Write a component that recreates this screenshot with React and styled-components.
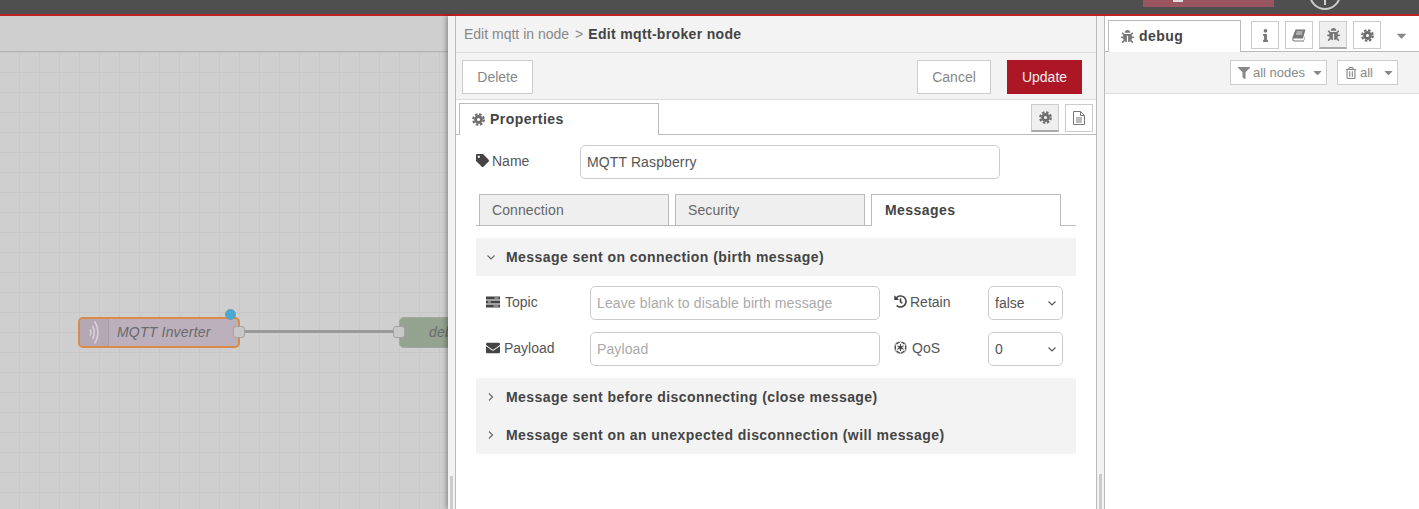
import React from 'react';
import styled, { createGlobalStyle } from 'styled-components';
import { FaTag, FaInfo, FaBug, FaFilter, FaRegTrashAlt, FaEnvelope, FaHistory, FaEmpire, FaCaretDown } from 'react-icons/fa';

const GlobalStyle = createGlobalStyle`
  html, body { margin: 0; padding: 0; height: 100%; overflow: hidden; background: #fff; }
  body { font-family: "Liberation Sans", Arial, sans-serif; font-size: 14px; color: #555; }
  * { box-sizing: border-box; }
`;

const Page = styled.div`
  width: 1419px;
  height: 509px;
  display: flex;
  flex-direction: column;
  overflow: hidden;
`;

const Header = styled.header`
  height: 16px;
  flex: none;
  background: #4f4f4f;
  border-bottom: 2px solid #c02020;
  display: flex;
  align-items: flex-end;
  overflow: hidden;
  padding: 0 0 7px 1143px;
`;

const DeployButton = styled.div`
  width: 131px;
  height: 24px;
  flex: none;
  background: #9a5660;
  display: flex;
  justify-content: center;
  align-items: flex-end;
  padding-right: 62px;
  &::before {
    content: '';
    width: 10px;
    height: 10px;
    margin-bottom: 5px;
    background: #ddd;
  }
`;

const MenuRing = styled.div`
  width: 32px;
  height: 32px;
  flex: none;
  margin: 0 0 -3px 35px;
  border: 2px solid #ccc;
  border-radius: 50%;
  display: flex;
  justify-content: center;
  align-items: flex-end;
  &::before {
    content: '';
    width: 2px;
    height: 8px;
    margin-bottom: 3px;
    background: #ccc;
  }
`;

const Main = styled.div`
  flex: 1;
  display: flex;
  min-height: 0;
`;

const Workspace = styled.section`
  width: 448px;
  flex: none;
  display: flex;
  flex-direction: column;
  background: #cfcfcf;
`;

const WorkspaceTabs = styled.div`
  height: 36px;
  flex: none;
  border-bottom: 1px solid #b4b4b4;
`;

const Canvas = styled.div`
  flex: 1;
  position: relative;
  overflow: hidden;
  background-color: #cfcfcf;
  background-image:
    linear-gradient(to right, #c8c8c8 1px, transparent 1px),
    linear-gradient(to bottom, #c8c8c8 1px, transparent 1px);
  background-size: 20px 20px;
  background-position: 19px 0;
`;

const FlowNode = styled.div`
  position: absolute;
  left: ${p => p.$left}px;
  top: 265px;
  width: ${p => p.$width}px;
  height: 31px;
  display: flex;
  align-items: center;
  border-radius: 5px;
  border: ${p => (p.$selected ? '2px solid #d98b47' : '1px solid #a0a89f')};
  background: ${p => p.$fill};
  font-style: italic;
  letter-spacing: .2px;
  color: #6a6a6a;
  white-space: nowrap;
`;

const NodeIcon = styled.div`
  width: 29px;
  height: 100%;
  flex: none;
  display: flex;
  align-items: center;
  justify-content: center;
  border-right: 1px solid #a99fa9;
  background: #b3a8b3;
  border-radius: 3px 0 0 3px;
`;

const NodeLabel = styled.span`
  padding: 0 0 2px ${p => p.$pad}px;
`;

const Port = styled.div`
  position: absolute;
  left: ${p => p.$left}px;
  top: 274px;
  width: 12px;
  height: 12px;
  border-radius: 3px;
  border: 1px solid #a3a3a3;
  background: #c8c8c8;
`;

const Wire = styled.div`
  position: absolute;
  left: 243px;
  top: 278px;
  width: 156px;
  height: 3px;
  background: #999;
`;

const StatusDot = styled.div`
  position: absolute;
  left: 225px;
  top: 257px;
  width: 11px;
  height: 11px;
  border-radius: 50%;
  background: #48a9d1;
  border: 1px solid #6e9aae;
`;

const Strip = styled.div`
  width: ${p => p.$width}px;
  flex: none;
  background: #f3f3f3;
  position: relative;
  box-shadow: ${p => (p.$shadow ? '-2px 0 4px rgba(0,0,0,.3)' : 'none')};
  z-index: 1;
`;

const ScrollThumb = styled.div`
  position: absolute;
  left: ${p => p.$left}px;
  bottom: 0;
  width: 3px;
  height: ${p => p.$height}px;
  background: #ccc;
`;

const Tray = styled.section`
  width: 642px;
  flex: none;
  display: flex;
  flex-direction: column;
  background: #fff;
  border-left: 1px solid #bbb;
  border-right: 1px solid #bbb;
  z-index: 1;
`;

const Crumbs = styled.div`
  height: 37px;
  flex: none;
  background: #f3f3f3;
  border-bottom: 1px solid #ddd;
  display: flex;
  align-items: center;
  padding-left: 8px;
  color: #888;
  gap: 5px;
  i { font-style: normal; margin-left: 1px; }
  b { color: #444; letter-spacing: .33px; }
`;

const ActionBar = styled.div`
  height: 47px;
  flex: none;
  background: #f3f3f3;
  border-bottom: 1px solid #ddd;
  display: flex;
  align-items: flex-start;
  padding: 7px 14px 0 6px;
`;

const ActionButton = styled.button`
  height: 34px;
  width: ${p => p.$width}px;
  margin-left: ${p => p.$gap || 0}px;
  font: inherit;
  cursor: pointer;
  color: ${p => (p.$primary ? '#eee' : '#888')};
  background: ${p => (p.$primary ? '#ad1625' : '#fff')};
  border: 1px solid ${p => (p.$primary ? '#ad1625' : '#ccc')};
`;

const TabRow = styled.div`
  height: 35px;
  flex: none;
  display: flex;
  align-items: flex-end;
  border-bottom: 1px solid #bbb;
  padding: 0 3px 0 3px;
`;

const ActiveTab = styled.div`
  width: ${p => p.$width}px;
  height: 32px;
  margin-bottom: -1px;
  background: #fff;
  border: 1px solid #bbb;
  border-bottom: none;
  display: flex;
  align-items: center;
  gap: 5px;
  padding-left: ${p => p.$pad}px;
  padding-bottom: 1px;
  font-weight: bold;
  letter-spacing: .45px;
  color: #444;
  svg { color: #777; flex: none; }
`;

const TabIcons = styled.div`
  margin-left: auto;
  align-self: flex-start;
  display: flex;
  gap: 6px;
  padding-top: 4px;
`;

const IconButton = styled.div`
  width: 28px;
  height: 28px;
  display: flex;
  align-items: center;
  justify-content: center;
  font-size: 13px;
  color: #777;
  background: ${p => (p.$active ? '#efefef' : '#fff')};
  border: 1px solid #ccc;
  border-bottom: ${p => (p.$active ? '2px solid #aaa' : '1px solid #ccc')};
`;

const Form = styled.div`
  flex: 1;
  padding: 10px 20px 0 20px;
`;

const NameRow = styled.div`
  display: flex;
  align-items: center;
  height: 34px;
`;

const FieldLabel = styled.label`
  width: ${p => p.$width}px;
  flex: none;
  display: flex;
  align-items: center;
  gap: ${p => p.$gap || 4}px;
  padding-bottom: 3px;
  color: #555;
  svg { color: #444; flex: none; }
`;

const TextInput = styled.input`
  width: ${p => p.$width}px;
  height: 34px;
  padding: 0 6px;
  font: inherit;
  letter-spacing: .12px;
  color: #555;
  background: #fff;
  border: 1px solid #ccc;
  border-radius: 5px;
  outline: none;
  &::placeholder { color: #aaa; opacity: 1; }
`;

const SubTabs = styled.div`
  height: 32px;
  margin-top: 15px;
  display: flex;
  gap: 6px;
  padding-left: 3px;
  border-bottom: 1px solid #bbb;
`;

const SubTab = styled.div`
  width: 190px;
  height: 32px;
  display: flex;
  align-items: center;
  padding: 0 0 ${p => (p.$active ? 2 : 0)}px ${p => (p.$active ? 13 : 12)}px;
  border: 1px solid #bbb;
  border-bottom: ${p => (p.$active ? 'none' : '1px solid #bbb')};
  background: ${p => (p.$active ? '#fff' : '#efefef')};
  color: ${p => (p.$active ? '#444' : '#666')};
  font-weight: ${p => (p.$active ? 'bold' : 'normal')};
  letter-spacing: ${p => (p.$active ? '.45px' : '.1px')};
`;

const SectionBlock = styled.div`
  background: #f3f3f3;
  margin-top: ${p => p.$top}px;
`;

const SectionTitle = styled.div`
  height: 38px;
  display: flex;
  align-items: center;
  gap: 10px;
  padding-left: 10px;
  font-weight: bold;
  letter-spacing: .44px;
  color: #444;
`;

const MessageGrid = styled.div`
  display: grid;
  grid-template-columns: 104px 290px 14px 94px 75px;
  grid-auto-rows: 34px;
  row-gap: 12px;
  margin: 10px 0 12px 10px;
  align-items: center;
`;

const Spacer = styled.div``;

const SelectBox = styled.div`
  height: 34px;
  display: flex;
  align-items: center;
  justify-content: space-between;
  padding: 0 5px 0 6px;
  border: 1px solid #ccc;
  border-radius: 5px;
  background: #fff;
  color: #555;
`;

const Sidebar = styled.aside`
  flex: 1;
  display: flex;
  flex-direction: column;
  border-left: 1px solid #bbb;
  background: #fff;
  min-width: 0;
`;

const SidebarTabs = styled.div`
  height: 36px;
  flex: none;
  display: flex;
  align-items: flex-end;
  padding-left: 3px;
  border-bottom: 1px solid #bbb;
  background: #fff;
`;

const SidebarIcons = styled.div`
  align-self: flex-start;
  display: flex;
  gap: 6px;
  padding: 5px 0 0 10px;
`;

const SidebarCaret = styled.div`
  align-self: flex-start;
  height: 28px;
  margin: 5px 0 0 12px;
  width: 16px;
  display: flex;
  justify-content: center;
  align-items: center;
  color: #888;
  font-size: 15px;
`;

const DebugBar = styled.div`
  height: 42px;
  flex: none;
  display: flex;
  justify-content: flex-end;
  gap: 10px;
  padding: 8px 21px 0 0;
  background: #f3f3f3;
  border-bottom: 1px solid #ddd;
`;

const FilterButton = styled.div`
  width: ${p => p.$width}px;
  height: 25px;
  display: flex;
  align-items: center;
  padding: 0 1px 0 7px;
  gap: 3px;
  font-size: 13px;
  color: #888;
  background: #fff;
  border: 1px solid #ccc;
  svg { flex: none; }
  svg:last-child { margin-left: auto; margin-right: 1px; font-size: 13px; }
`;

const WaveIcon = () => (
  <svg width="12" height="25" viewBox="0 0 12 25" fill="none" stroke="#d8d2d8" strokeWidth="1.6">
    <path d="M6.500 1.500c4.500 6.500 4.500 15.500 0 22" />
    <path d="M4.500 6c2.300 4.200 2.300 8.800 0 13" />
    <path d="M2 9.500c1.200 2 1.200 4 0 6" />
  </svg>
);

// chunky gear like the old font-awesome cog
const GearIcon = ({ size = 13 }) => (
  <svg width={size} height={size} viewBox="0 0 13 13" fill="none" stroke="#6e6e6e">
    <circle cx="6.500" cy="6.500" r="3" strokeWidth="2.800" />
    <circle cx="6.500" cy="6.500" r="5.300" strokeWidth="2.200" strokeDasharray="2.500 1.660" />
  </svg>
);

const BookIcon = () => (
  <svg width="14" height="13" viewBox="0 0 14 13" fill="#777">
    <path d="M3.500.5H13.500L11 9.500H1.800C1.300 9.500 1.200 10 1.400 10.600 1.600 11.200 2 11.500 2.500 11.500H11.500L13 7V8.500L11.800 12.500H2.200C1.200 12.500.4 11.500.3 10.200.2 9.500.3 9 .6 8.200Z" />
    <path d="M4.500 3H10.500M4 5H10" stroke="#fff" strokeWidth=".8" />
  </svg>
);

const FileIcon = () => (
  <svg width="12" height="14" viewBox="0 0 12 14" fill="none" stroke="#777">
    <path d="M.5.500H7.500L11.500 4.500V13.500H.5Z" />
    <path d="M7.500.5V4.500H11.500M3 7H9M3 9H9M3 11H9" />
  </svg>
);

const TasksIcon = () => (
  <svg width="14" height="12" viewBox="0 0 14 12" fill="#444">
    <rect x="0" y="0.500" width="14" height="3" />
    <rect x="0" y="4.500" width="14" height="3" />
    <rect x="0" y="8.500" width="14" height="3" />
    <path d="M8.500 2H12.500M2 6H5M7.500 10H12.500" stroke="#ccc" strokeWidth="1" />
  </svg>
);

const Chevron = ({ open, color = '#666' }) => (
  <svg width="10" height="10" viewBox="0 0 10 10" fill="none" stroke={color} strokeWidth="1.1">
    <path d={open ? 'M1.500 3.500L5 7L8.500 3.500' : 'M3 1.500L6.500 5L3 8.500'} />
  </svg>
);

export default function App() {
  return (
    <Page>
      <GlobalStyle />
      <Header>
        <DeployButton />
        <MenuRing />
      </Header>
      <Main>
        <Workspace>
          <WorkspaceTabs />
          <Canvas>
            <Wire />
            <FlowNode $left={78} $width={162} $fill="#bbb0bb" $selected>
              <NodeIcon><WaveIcon /></NodeIcon>
              <NodeLabel $pad={8}>MQTT Inverter</NodeLabel>
            </FlowNode>
            <FlowNode $left={399} $width={80} $fill="#93a390">
              <NodeLabel $pad={29}>debug</NodeLabel>
            </FlowNode>
            <StatusDot />
            <Port $left={233} />
            <Port $left={393} />
          </Canvas>
        </Workspace>
        <Strip $width={7} $shadow>
          <ScrollThumb $left={2} $height={33} />
        </Strip>
        <Tray>
          <Crumbs>
            <span>Edit mqtt in node</span>
            <i>&gt;</i>
            <b>Edit mqtt-broker node</b>
          </Crumbs>
          <ActionBar>
            <ActionButton $width={71}>Delete</ActionButton>
            <ActionButton $width={74} $gap={384}>Cancel</ActionButton>
            <ActionButton $width={75} $gap={16} $primary>Update</ActionButton>
          </ActionBar>
          <TabRow>
            <ActiveTab $width={200} $pad={12}><GearIcon />Properties</ActiveTab>
            <TabIcons>
              <IconButton $active><GearIcon /></IconButton>
              <IconButton><FileIcon /></IconButton>
            </TabIcons>
          </TabRow>
          <Form>
            <NameRow>
              <FieldLabel $width={104} $gap={3}><FaTag size={13} />Name</FieldLabel>
              <TextInput $width={420} defaultValue="MQTT Raspberry" />
            </NameRow>
            <SubTabs>
              <SubTab>Connection</SubTab>
              <SubTab>Security</SubTab>
              <SubTab $active>Messages</SubTab>
            </SubTabs>
            <SectionBlock $top={12}>
              <SectionTitle><Chevron open />Message sent on connection (birth message)</SectionTitle>
            </SectionBlock>
            <MessageGrid>
              <FieldLabel $width={104} $gap={5}><TasksIcon />Topic</FieldLabel>
              <TextInput $width={290} placeholder="Leave blank to disable birth message" />
              <Spacer />
              <FieldLabel $width={94} $gap={3}><FaHistory size={13} />Retain</FieldLabel>
              <SelectBox>false<Chevron open color="#555" /></SelectBox>
              <FieldLabel $width={104} $gap={4}><FaEnvelope size={14} />Payload</FieldLabel>
              <TextInput $width={290} placeholder="Payload" />
              <Spacer />
              <FieldLabel $width={94} $gap={5}><FaEmpire size={13} />QoS</FieldLabel>
              <SelectBox>0<Chevron open color="#555" /></SelectBox>
            </MessageGrid>
            <SectionBlock $top={0}>
              <SectionTitle><Chevron />Message sent before disconnecting (close message)</SectionTitle>
              <SectionTitle><Chevron />Message sent on an unexpected disconnection (will message)</SectionTitle>
            </SectionBlock>
          </Form>
        </Tray>
        <Strip $width={7}>
          <ScrollThumb $left={2} $height={35} />
        </Strip>
        <Sidebar>
          <SidebarTabs>
            <ActiveTab $width={133} $pad={12}><FaBug size={13} />debug</ActiveTab>
            <SidebarIcons>
              <IconButton><FaInfo /></IconButton>
              <IconButton><BookIcon /></IconButton>
              <IconButton $active><FaBug /></IconButton>
              <IconButton><GearIcon /></IconButton>
            </SidebarIcons>
            <SidebarCaret><FaCaretDown /></SidebarCaret>
          </SidebarTabs>
          <DebugBar>
            <FilterButton $width={97}><FaFilter size={12} />all nodes<FaCaretDown /></FilterButton>
            <FilterButton $width={61}><FaRegTrashAlt size={12} />all<FaCaretDown /></FilterButton>
          </DebugBar>
        </Sidebar>
      </Main>
    </Page>
  );
}
